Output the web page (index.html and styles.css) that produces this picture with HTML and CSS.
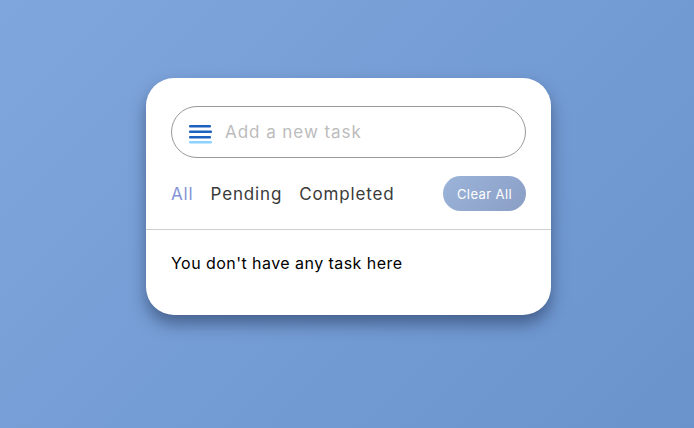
FILE: index.html
```html
<!DOCTYPE html>
<html lang="en">
<head>
<meta charset="utf-8">
<title>Todo</title>
<link rel="stylesheet" href="styles.css">
</head>
<body>
  <div class="card">
    <div class="top">
      <div class="task-input">
        <svg class="icon" width="24" height="20" viewBox="0 0 24 20" aria-hidden="true">
          <rect x="0" y="1" width="22" height="2.4" rx="1" fill="#1f5fbf"/>
          <rect x="0" y="6.5" width="23" height="2.4" rx="1" fill="#1f5fbf"/>
          <rect x="0" y="12" width="22" height="2.4" rx="1" fill="#1f5fbf"/>
          <rect x="0" y="17" width="23" height="2.4" rx="1" fill="#8ed2ff"/>
        </svg>
        <input type="text" placeholder="Add a new task">
      </div>
      <div class="controls">
        <div class="filters">
          <span class="filter active">All</span>
          <span class="filter">Pending</span>
          <span class="filter">Completed</span>
        </div>
        <button class="clear-btn">Clear All</button>
      </div>
    </div>
    <div class="task-box">
      <span class="empty">You don't have any task here</span>
    </div>
  </div>
</body>
</html>
```
FILE: styles.css
```css
* { box-sizing: border-box; }
html, body { height: 100%; }
body {
  margin: 0;
  font-family: "Inter", "Noto Sans", sans-serif;
  background: linear-gradient(135deg, #80a7dd 0%, #6a93cc 100%);
  display: flex;
  justify-content: center;
  align-items: flex-start;
  padding-top: 78px;
  padding-left: 3px;
}
.card {
  width: 405px;
  background: #fff;
  border-radius: 28px;
  padding-top: 28px;
  box-shadow: 0 9px 16px rgba(25, 40, 75, 0.5);
}
.top { padding: 0 25px; }
.task-input {
  height: 52px;
  border: 1px solid #999;
  border-radius: 26px;
  display: flex;
  align-items: center;
  padding-left: 17px;
  gap: 12px;
}
.icon { flex: none; margin-top: 3px; }
.task-input input {
  border: none;
  outline: none;
  flex: 1;
  font-family: inherit;
  font-size: 17px;
  letter-spacing: 0.95px;
  color: #333;
  background: transparent;
  padding: 0;
}
.task-input input::placeholder { color: #bcbcbc; }
.controls {
  margin-top: 18px;
  height: 35px;
  display: flex;
  align-items: center;
  justify-content: space-between;
}
.filters { display: flex; gap: 17px; }
.filter {
  font-size: 17px;
  letter-spacing: 0.85px;
  color: #3a3a3a;
}
.filter.active { color: #8594d6; }
.clear-btn {
  height: 35px;
  width: 83px;
  border: none;
  border-radius: 18px;
  background: linear-gradient(135deg, #9cb4da 0%, #8a9ec4 100%);
  color: #fff;
  font-family: inherit;
  font-size: 13px;
  letter-spacing: 0.4px;
  padding: 0;
}
.task-box {
  margin-top: 18px;
  border-top: 1px solid #cfcfcf;
  padding: 21px 25px 40px;
}
.empty {
  display: block;
  font-size: 16px;
  line-height: 24px;
  letter-spacing: 0.45px;
  color: #000;
}
```
